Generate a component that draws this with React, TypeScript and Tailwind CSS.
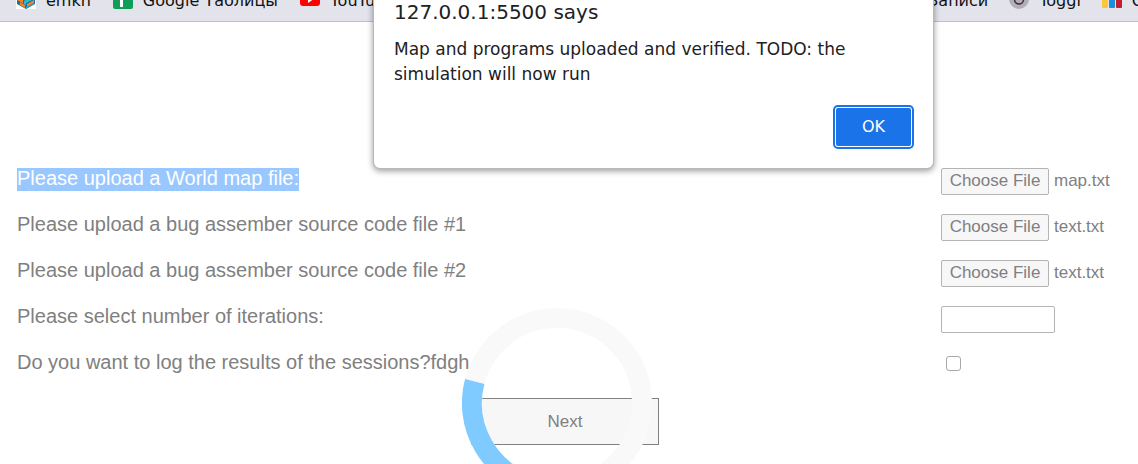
import { useState, type ReactNode } from 'react';

function CubeIcon() {
  return (
    <svg className="h-5 w-5 bg-white" viewBox="0 0 20 20" aria-hidden="true">
      <path d="M10 1 19 5v10l-9 5-9-5V5z" fill="#1b6fae" />
      <path d="M10 2l8 4-8 4-8-4z" fill="#27b5b2" />
      <path d="M1 8l6 3v3l-6-3z" fill="#f58220" />
      <path d="M4 13l5 3v3l-5-3z" fill="#f58220" />
      <path d="M8 12l8-4v3l-6 3v2l-2-1z" fill="#2fbcc0" />
      <path d="M11 15l7-4v3l-7 4z" fill="#f58220" />
      <path d="M16 8l3-1v3l-3 1z" fill="#2389c4" />
      <path d="M10 18l8-4v1l-8 5z" fill="#27a9b5" />
    </svg>
  );
}

function SheetsIcon() {
  return (
    <svg className="h-5 w-5" viewBox="0 0 20 20" aria-hidden="true">
      <rect width="20" height="20" rx="2" fill="#0f9d58" />
      <path d="M3 5h14v3h-7v10H7V8H3z" fill="#fff" />
    </svg>
  );
}

function VideoIcon() {
  return (
    <svg className="h-5 w-5" viewBox="0 0 20 20" aria-hidden="true">
      <rect y="3" width="20" height="14" rx="3" fill="#f00" />
      <path d="M8 7l5 3.5-5 3.5z" fill="#fff" />
    </svg>
  );
}

function TimerIcon() {
  return (
    <svg className="h-5 w-5" viewBox="0 0 20 20" aria-hidden="true">
      <circle cx="10" cy="10" r="10" fill="#b3b0b3" />
      <circle cx="10" cy="10.5" r="4.5" fill="none" stroke="#412a4c" strokeWidth="1.5" />
      <path d="M10 3v7" stroke="#412a4c" strokeWidth="1.5" />
    </svg>
  );
}

function BarsIcon() {
  return (
    <svg className="h-5 w-5" viewBox="0 0 20 20" aria-hidden="true">
      <rect y="9" width="6" height="10" rx="1" fill="#fcc63c" />
      <rect x="7" y="2" width="6" height="17" rx="1" fill="#1c8fd6" />
      <rect x="14" y="5" width="6" height="14" rx="1" fill="#c1202f" />
    </svg>
  );
}

function Bookmark({ href, icon, children }: { href: string; icon?: ReactNode; children: ReactNode }) {
  return (
    <a href={href} className="flex shrink-0 items-center gap-2.5 whitespace-nowrap">
      {icon}
      <span className="pt-1">{children}</span>
    </a>
  );
}

function Bookmarks() {
  return (
    <nav
      aria-label="Bookmarks"
      className="h-[22px] overflow-hidden border-b border-[#bfbfc6] bg-[#e3e3ec] font-['DejaVu_Sans',sans-serif] text-base leading-5 text-[#111111]"
    >
      <div className="-mt-[11px] flex h-5 items-center justify-between pl-4">
        <div className="flex gap-[22px]">
          <Bookmark href="#emkn" icon={<CubeIcon />}>emkn</Bookmark>
          <Bookmark href="#sheets" icon={<SheetsIcon />}>Google Таблицы</Bookmark>
          <Bookmark href="#youtube" icon={<VideoIcon />}>YouTube</Bookmark>
        </div>
        <div className="-mr-[5px] flex gap-[21px]">
          <Bookmark href="#notes">Записи</Bookmark>
          <Bookmark href="#toggl" icon={<TimerIcon />}>Toggl</Bookmark>
          <Bookmark href="#stats" icon={<BarsIcon />}>C</Bookmark>
        </div>
      </div>
    </nav>
  );
}

const row = 'flex h-[46px] items-start justify-between';
const caption = 'pb-0.5';

function FileRow({ id, label, file, selected = false }: { id: string; label: string; file: string; selected?: boolean }) {
  return (
    <div className={row}>
      <label htmlFor={id} className={selected ? 'bg-[#99c7ff] pb-0.5 text-white' : caption}>{label}</label>
      <div className="flex w-[172px] items-center gap-[5px] text-[17px]">
        <button id={id} type="button" className="h-[27px] w-[108px] shrink-0 rounded-xs border border-[#b4b4b4] bg-[#f7f7f7] pb-0.5">
          Choose File
        </button>
        <span className="pb-0.5">{file}</span>
      </div>
    </div>
  );
}

function Spinner() {
  return (
    <svg role="status" aria-label="Loading" className="pointer-events-none absolute -top-[90px] left-1/2 -ml-[103px] h-[190px] w-[190px]" viewBox="0 0 190 190">
      <circle cx="95" cy="95" r="85" fill="none" stroke="#f9f9f9" strokeWidth="20" />
      <path d="M12.7 73.5A85 85 0 0 0 73.5 177.3" fill="none" stroke="#7fcaff" strokeWidth="20" />
    </svg>
  );
}

function AlertDialog({ onClose }: { onClose: () => void }) {
  return (
    <div
      role="alertdialog"
      aria-labelledby="alert-title"
      aria-describedby="alert-text"
      className="absolute top-0 left-1/2 ml-[-195px] w-[559px] rounded-b-md bg-white px-5 pb-[22px] font-['DejaVu_Sans',sans-serif] text-[#202124] shadow-[0_0_0_1px_#b8b8b8,0_2px_6px_1px_#00000066]"
    >
      <h1 id="alert-title" className="text-xl leading-6">127.0.0.1:5500 says</h1>
      <p id="alert-text" className="mt-[13px] text-[17px] leading-[25px]">
        Map and programs uploaded and verified. TODO: the simulation will now run
      </p>
      <div className="mt-[21px] flex justify-end pr-0.5">
        <button type="button" onClick={onClose} className="h-[38px] w-[75px] rounded-xs bg-[#1a73e8] text-base text-white ring-2 ring-[#1a73e8] ring-offset-1">
          OK
        </button>
      </div>
    </div>
  );
}

export default function App() {
  const [open, setOpen] = useState(true);
  return (
    <div className="relative h-screen overflow-hidden bg-white">
      <Bookmarks />
      <form className="pt-[146px] pr-[25px] pl-[17px] font-['Liberation_Sans',sans-serif] text-xl leading-[21px] text-[#808080]">
        <FileRow id="map" label="Please upload a World map file:" file="map.txt" selected />
        <FileRow id="source-1" label="Please upload a bug assember source code file #1" file="text.txt" />
        <FileRow id="source-2" label="Please upload a bug assember source code file #2" file="text.txt" />
        <div className={row}>
          <label htmlFor="iterations" className={caption}>Please select number of iterations:</label>
          <div className="flex w-[172px]">
            <input id="iterations" type="text" className="h-[27px] w-[114px] rounded-xs border border-[#b4b4b4] px-1" />
          </div>
        </div>
        <div className={row}>
          <label htmlFor="log" className={caption}>Do you want to log the results of the sessions?fdgh</label>
          <div className="flex h-[23px] w-[172px] items-center pl-[5px]">
            <input id="log" type="checkbox" className="h-[15px] w-[15px] appearance-none rounded-[3px] border border-[#a8a8a8] checked:bg-[#1a73e8]" />
          </div>
        </div>
        <div className="relative flex justify-center">
          <button type="button" className="h-[47px] w-[188px] border border-[#808080] bg-[#f7f7f7] text-[17px]">Next</button>
          <Spinner />
        </div>
      </form>
      {open && <AlertDialog onClose={() => setOpen(false)} />}
    </div>
  );
}
